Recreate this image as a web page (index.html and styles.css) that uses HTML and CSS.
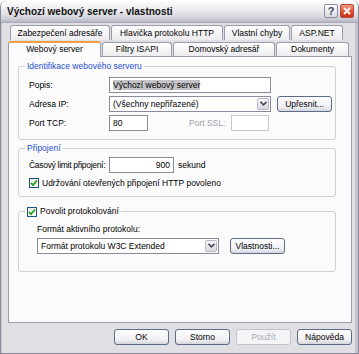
FILE: index.html
```html
<!DOCTYPE html>
<html>

<head>
    <meta charset="UTF-8">
    <title>Výchozí webový server - vlastnosti</title>
    <link rel="stylesheet" href="styles.css">
</head>

<body>
    <div class="window">
        <div class="titlebar">
            <span class="title">Výchozí webový server - vlastnosti</span>
            <span class="tb-btn help">?</span>
            <span class="tb-btn close">
                <svg width="8" height="8" viewBox="0 0 8 8"><path d="M1 1L7 7M7 1L1 7" stroke="#fff" stroke-width="1.8"/></svg>
            </span>
        </div>
        <div class="body">
            <div class="tabs">
                <div class="tab-row back">
                    <span class="tab" style="width: 100px">Zabezpečení adresáře</span>
                    <span class="tab" style="width: 112px">Hlavička protokolu HTTP</span>
                    <span class="tab" style="width: 66px">Vlastní chyby</span>
                    <span class="tab" style="width: 52px">ASP.NET</span>
                </div>
                <div class="tab-row front">
                    <span class="tab active" style="width: 93px">Webový server</span>
                    <span class="tab" style="width: 70px">Filtry ISAPI</span>
                    <span class="tab" style="width: 102px">Domovský adresář</span>
                    <span class="tab" style="width: 73px">Dokumenty</span>
                </div>
            </div>
            <div class="panel">
                <fieldset class="group g1">
                    <legend>Identifikace webového serveru</legend>
                    <div class="row">
                        <span class="label">Popis:</span>
                        <span class="input wide"><span class="sel">Výchozí webový server</span></span>
                    </div>
                    <div class="row">
                        <span class="label">Adresa IP:</span>
                        <span class="select wide">(Všechny nepřiřazené)<span class="arrow"><svg width="7" height="5" viewBox="0 0 7 5"><path d="M0.5 0.8L3.5 3.8L6.5 0.8" fill="none" stroke="#4d4d5a" stroke-width="1.6"/></svg></span></span>
                        <span class="button more">Upřesnit...</span>
                    </div>
                    <div class="row">
                        <span class="label">Port TCP:</span>
                        <span class="input port">80</span>
                        <span class="label-ssl">Port SSL:</span>
                        <span class="input ssl"></span>
                    </div>
                </fieldset>

                <fieldset class="group g2">
                    <legend>Připojení</legend>
                    <div class="row">
                        <span class="label">Časový limit připojení:</span>
                        <span class="input limit">900</span>
                        <span class="unit">sekund</span>
                    </div>
                    <div class="row check-row">
                        <span class="check"><svg width="8" height="8" viewBox="0 0 8 8"><path d="M1 4L3 6.2L7 1.5" fill="none" stroke="#21a121" stroke-width="1.8"/></svg></span>
                        <span>Udržování otevřených připojení HTTP povoleno</span>
                    </div>
                </fieldset>

                <fieldset class="group g3">
                    <legend><span class="check"><svg width="8" height="8" viewBox="0 0 8 8"><path d="M1 4L3 6.2L7 1.5" fill="none" stroke="#21a121" stroke-width="1.8"/></svg></span>Povolit protokolování</legend>
                    <div class="caption">Formát aktivního protokolu:</div>
                    <div class="row">
                        <span class="select format">Formát protokolu W3C Extended<span class="arrow"><svg width="7" height="5" viewBox="0 0 7 5"><path d="M0.5 0.8L3.5 3.8L6.5 0.8" fill="none" stroke="#4d4d5a" stroke-width="1.6"/></svg></span></span>
                        <span class="button props">Vlastnosti...</span>
                    </div>
                </fieldset>
            </div>
            <div class="actions">
                <span class="button">OK</span>
                <span class="button">Storno</span>
                <span class="button disabled">Použít</span>
                <span class="button">Nápověda</span>
            </div>
        </div>
    </div>
</body>

</html>
```

FILE: styles.css
```css
/* XP silver dialog */
body {
    margin: 0;
    font-family: "Liberation Sans", Arial, sans-serif;
    font-size: 8.5px;
    color: #000;
}

.window {
    width: 359px;
    height: 354px;
    box-sizing: border-box;
    background: #e0dfe3;
    border: 1px solid #8a8a99;
    border-top: none;
    border-radius: 7px 7px 0 0;
    overflow: hidden;
}

.titlebar {
    height: 23px;
    display: flex;
    align-items: center;
    padding: 0 4px 0 6px;
    background: linear-gradient(#ffffff, #ececf0 45%, #d4d4dc 80%, #b8b8c6);
    border-bottom: 1px solid #a8a8b8;
    box-sizing: border-box;
}

.title {
    flex: 1;
    font-size: 10px;
    font-weight: bold;
    color: #111;
}

.tb-btn {
    width: 14px;
    height: 14px;
    box-sizing: border-box;
    border-radius: 2px;
    margin-left: 2px;
    display: flex;
    align-items: center;
    justify-content: center;
}

.help {
    border: 1px solid #8c8ca0;
    background: linear-gradient(#ffffff, #d8d8e2);
    font-size: 11px;
    font-weight: bold;
    color: #454560;
}

.close {
    border: 1px solid #b4483a;
    background: linear-gradient(#f29c86, #e04a2a 60%, #c9321a);
}

.body {
    padding: 2px 3px 0 6px;
    border-left: 1px solid #c4c4d0;
    border-right: 3px solid #c4c4d0;
    border-bottom: 3px solid #c4c4d0;
    height: 328px;
}

.tab-row {
    display: flex;
    height: 16px;
}

.tab-row.back {
    padding-left: 2px;
}

.tab-row.front {
    height: 15px;
    align-items: flex-end;
}

.tab {
    box-sizing: border-box;
    height: 15px;
    margin-right: 1px;
    border: 1px solid #9c9caa;
    border-bottom: none;
    border-radius: 3px 3px 0 0;
    background: linear-gradient(#ffffff, #ececf0);
    text-align: center;
    line-height: 14px;
    white-space: nowrap;
}

.tab-row.front .tab {
    height: 14px;
    line-height: 13px;
}

.tab-row.front .tab.active {
    height: 16px;
    margin-bottom: -1px;
    background: #fcfcfe;
    border-top: 2px solid #f0a040;
    position: relative;
    line-height: 13px;
}

.panel {
    height: 267px;
    box-sizing: border-box;
    background: #fbfbfb;
    border: 1px solid #9c9caa;
    padding: 4px 15px 0 9px;
}

.group {
    margin: 0;
    border: 1px solid #cfcfd4;
    border-radius: 3px;
    padding: 0 0 0 10px;
}

.group legend {
    color: #1f4fcf;
    padding: 0 2px;
    margin-left: -4px;
    line-height: 11px;
    display: flex;
    align-items: center;
}

.row {
    display: flex;
    align-items: center;
    height: 19px;
    white-space: nowrap;
}

.g1 {
    height: 74px;
    padding-top: 3px;
}

.g2 {
    margin-top: 3px;
    height: 51px;
    padding-top: 1px;
}

.g3 {
    margin-top: 9px;
    height: 64px;
}

.label {
    width: 80px;
}

.g2 .label {
    width: 80px;
    letter-spacing: -0.3px;
}

.input,
.select {
    box-sizing: border-box;
    height: 16px;
    border: 1px solid #8a8aa0;
    background: #fff;
    padding: 0 3px;
    line-height: 14px;
    display: inline-block;
}

.wide {
    width: 162px;
}

.sel {
    background: #c4c4c8;
}

.select {
    position: relative;
    padding-right: 16px;
}

.arrow {
    position: absolute;
    right: 1px;
    top: 1px;
    width: 12px;
    height: 12px;
    box-sizing: border-box;
    border: 1px solid #b8b8c8;
    border-radius: 2px;
    background: linear-gradient(#f8f8fa, #d8d8e0);
    display: flex;
    align-items: center;
    justify-content: center;
}

.button {
    box-sizing: border-box;
    height: 16px;
    width: 55px;
    border: 1px solid #5d6b86;
    border-radius: 3px;
    background: linear-gradient(#ffffff, #f0f0f4 70%, #d4d4dc);
    text-align: center;
    line-height: 14px;
    display: inline-block;
}

.more {
    margin-left: 6px;
}

.port {
    width: 39px;
}

.label-ssl {
    color: #a0a0a8;
    margin-left: 41px;
    width: 42px;
}

.ssl {
    width: 38px;
    border-color: #c8c8d0;
}

.limit {
    width: 65px;
    text-align: right;
}

.unit {
    margin-left: 4px;
}

.check {
    width: 10px;
    height: 10px;
    box-sizing: border-box;
    border: 1px solid #1c5180;
    background: linear-gradient(135deg, #e8e8e0, #ffffff);
    display: inline-flex;
    align-items: center;
    justify-content: center;
    margin-right: 3px;
}

.check-row {
    height: 17px;
}

.g3 legend {
    color: #000;
}

.caption {
    margin: 7px 0 2px 8px;
}

.g3 .row {
    padding-left: 8px;
}

.format {
    width: 182px;
}

.props {
    margin-left: 11px;
}

.actions {
    display: flex;
    justify-content: flex-end;
    gap: 6px;
    padding-top: 6px;
}

.button.disabled {
    color: #a8a8b0;
    border-color: #c4c4cc;
    background: #f4f4f6;
}
```
